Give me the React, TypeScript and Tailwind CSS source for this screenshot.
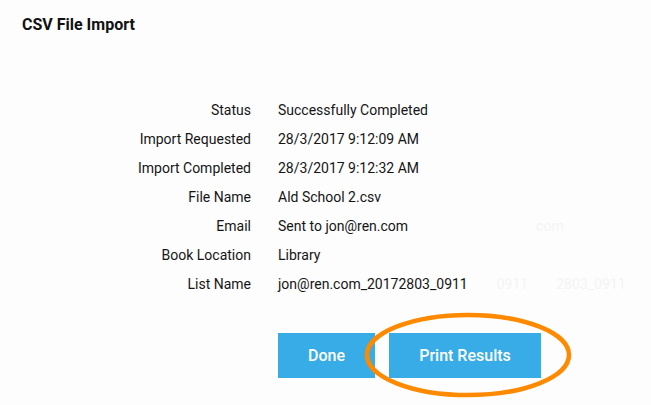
import React from "react";

type Row = { k: string; v: string; ghost?: { text: string; ml: string }[] };

const rows: Row[] = [
  { k: "Status", v: "Successfully Completed" },
  { k: "Import Requested", v: "28/3/2017 9:12:09 AM" },
  { k: "Import Completed", v: "28/3/2017 9:12:32 AM" },
  { k: "File Name", v: "Ald School 2.csv" },
  { k: "Email", v: "Sent to jon@ren.com", ghost: [{ text: "com", ml: "ml-[128px]" }] },
  { k: "Book Location", v: "Library" },
  {
    k: "List Name",
    v: "jon@ren.com_20172803_0911",
    ghost: [
      { text: "0911", ml: "ml-[29px]" },
      { text: "2803_0911", ml: "ml-[28px]" },
    ],
  },
];

export default function App() {
  return (
    <div
      className="w-[651px] h-[405px] bg-[#fdfdfd] text-[#151515] relative overflow-hidden"
      style={{ fontFamily: "Roboto, 'Liberation Sans', sans-serif" }}
    >
      <div className="pl-[22px] pt-[15px]">
        <h1 className="text-[16px] font-bold leading-[20px] text-[#111]">CSV File Import</h1>
      </div>
      <div className="mt-[61px] grid grid-cols-[251px_1fr] gap-x-[27px] text-[14px]">
        {rows.map((r) => (
          <React.Fragment key={r.k}>
            <div className="text-right h-[29px] leading-[29px]">{r.k}</div>
            <div className="h-[29px] leading-[29px] flex whitespace-nowrap">
              <span>{r.v}</span>
              {r.ghost?.map((g) => (
                <span key={g.text} className={`${g.ml} text-[#f4f4f4]`}>
                  {g.text}
                </span>
              ))}
            </div>
          </React.Fragment>
        ))}
      </div>
      <div className="mt-[34px] pl-[278px] flex gap-[14px]">
        <button className="w-[97px] h-[45px] bg-[#37ace6] text-white text-[16px] font-medium">Done</button>
        <div className="relative">
          <button className="w-[152px] h-[45px] bg-[#37ace6] text-white text-[16px] font-medium">Print Results</button>
          <svg className="absolute left-[-27px] top-[-24px] pointer-events-none" width="212" height="94" viewBox="0 0 212 94">
            <ellipse cx="106" cy="46" rx="101" ry="40" fill="none" stroke="#ff8a00" strokeWidth="4.5" />
          </svg>
        </div>
      </div>
    </div>
  );
}
